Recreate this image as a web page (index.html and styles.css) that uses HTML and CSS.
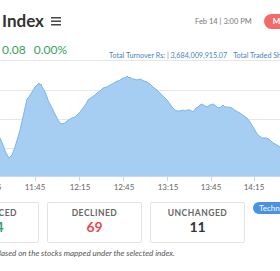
FILE: index.html
```html
<!DOCTYPE html>
<html lang="en">
<head>
    <meta charset="UTF-8">
    <meta name="viewport" content="width=device-width, initial-scale=1.0">
    <title>Index</title>
    <link rel="stylesheet" href="styles.css">
</head>
<body>
    <main class="page">
        <div class="head-row">
            <h1 class="index-title">Index</h1>
            <svg class="menu-icon" width="10" height="9" viewBox="0 0 10 9">
                <rect x="0" y="0" width="10" height="1.5" fill="#444"/>
                <rect x="0" y="3.5" width="10" height="1.5" fill="#444"/>
                <rect x="0" y="7" width="10" height="1.5" fill="#444"/>
            </svg>
            <div class="meta">
                <span class="stamp">Feb 14 | 3:00 PM</span>
                <span class="market-status">Market Closed</span>
            </div>
        </div>

        <div class="sub-row">
            <div class="change">
                <span>0.08</span>
                <span>0.00%</span>
            </div>
            <div class="turnover">
                <span>Total Turnover Rs: | 3,684,009,915.07</span>
                <span>Total Traded Shares: | 9,802,115</span>
            </div>
        </div>

        <svg class="chart" width="280" height="136" viewBox="0 62 280 136">
            <!-- grid -->
            <g stroke="#e6e6e6" stroke-width="1">
                <line x1="0" y1="65.5" x2="280" y2="65.5"/>
                <line x1="0" y1="95.5" x2="280" y2="95.5"/>
                <line x1="0" y1="124.5" x2="280" y2="124.5"/>
                <line x1="0" y1="153.5" x2="280" y2="153.5"/>
            </g>
            <path fill="#a6cdf2" stroke="none"
                d="M0,143 L3,150 L6,158 L9,163 L12,160 L15,152 L18,142 L20,135 L23,122 L25,113 L27,104 L29,102 L30,100 L32,97 L34,94 L35,92 L37,90 L39,88 L40,90 L41,89 L42,92 L44,95 L45,97 L47,102 L48,105 L50,109 L53,115 L56,121 L58,125 L60,128 L62,129 L65,128 L67,126 L70,124 L72,123 L75,122 L77,120 L80,117 L83,113 L86,109 L88,105 L92,102 L95,100 L97,98 L100,96 L103,93 L107,92 L110,90 L112,89 L114,88 L117,86 L119,86 L120,85 L123,83 L125,83 L127,81 L129,83 L130,82 L132,84 L134,84 L137,85 L140,84 L144,86 L147,87 L150,89 L153,92 L157,95 L160,98 L163,101 L167,105 L170,109 L172,112 L175,115 L177,116 L180,116 L183,115 L185,116 L187,115 L190,115 L193,117 L196,113 L198,112 L200,110 L202,109 L205,111 L207,112 L210,110 L213,109 L216,111 L218,113 L221,112 L223,110 L225,112 L228,112 L232,113 L236,116 L240,118 L244,121 L247,123 L250,127 L253,132 L256,137 L258,140 L262,143 L265,143 L267,143 L270,145 L272,147 L275,149 L277,150 L280,152 L280,181 L0,181 Z"/>
            <path fill="none" stroke="#7cb5ec" stroke-width="1"
                d="M0,143 L3,150 L6,158 L9,163 L12,160 L15,152 L18,142 L20,135 L23,122 L25,113 L27,104 L29,102 L30,100 L32,97 L34,94 L35,92 L37,90 L39,88 L40,90 L41,89 L42,92 L44,95 L45,97 L47,102 L48,105 L50,109 L53,115 L56,121 L58,125 L60,128 L62,129 L65,128 L67,126 L70,124 L72,123 L75,122 L77,120 L80,117 L83,113 L86,109 L88,105 L92,102 L95,100 L97,98 L100,96 L103,93 L107,92 L110,90 L112,89 L114,88 L117,86 L119,86 L120,85 L123,83 L125,83 L127,81 L129,83 L130,82 L132,84 L134,84 L137,85 L140,84 L144,86 L147,87 L150,89 L153,92 L157,95 L160,98 L163,101 L167,105 L170,109 L172,112 L175,115 L177,116 L180,116 L183,115 L185,116 L187,115 L190,115 L193,117 L196,113 L198,112 L200,110 L202,109 L205,111 L207,112 L210,110 L213,109 L216,111 L218,113 L221,112 L223,110 L225,112 L228,112 L232,113 L236,116 L240,118 L244,121 L247,123 L250,127 L253,132 L256,137 L258,140 L262,143 L265,143 L267,143 L270,145 L272,147 L275,149 L277,150 L280,152"/>
            <!-- x axis -->
            <line x1="0" y1="181.5" x2="280" y2="181.5" stroke="#ccd6eb"/>
            <g stroke="#ccd6eb">
                <line x1="35.5" y1="181" x2="35.5" y2="186"/>
                <line x1="79.5" y1="181" x2="79.5" y2="186"/>
                <line x1="123.5" y1="181" x2="123.5" y2="186"/>
                <line x1="167.5" y1="181" x2="167.5" y2="186"/>
                <line x1="211.5" y1="181" x2="211.5" y2="186"/>
                <line x1="254.5" y1="181" x2="254.5" y2="186"/>
            </g>
            <g class="axis-label" text-anchor="middle">
                <text x="-9" y="195">11:15</text>
                <text x="35" y="195">11:45</text>
                <text x="80" y="195">12:15</text>
                <text x="124" y="195">12:45</text>
                <text x="168" y="195">13:15</text>
                <text x="211" y="195">13:45</text>
                <text x="254" y="195">14:15</text>
            </g>
        </svg>

        <div class="stats-row">
            <div class="stat">
                <div class="stat-label">ADVANCED</div>
                <div class="stat-value up">124</div>
            </div>
            <div class="stat">
                <div class="stat-label">DECLINED</div>
                <div class="stat-value down">69</div>
            </div>
            <div class="stat">
                <div class="stat-label">UNCHANGED</div>
                <div class="stat-value">11</div>
            </div>
            <span class="tech-tag">Technical</span>
        </div>

        <p class="note">*Based on the stocks mapped under the selected index.</p>
    </main>
</body>
</html>
```

FILE: styles.css
```css
/* General styles */
html, body {
    margin: 0;
    padding: 0;
    overflow: hidden;
    background: #fff;
}

body {
    font-family: Lato, "Noto Sans", sans-serif;
    color: #333;
}

.page {
    width: 360px;
}

/* Title row */
.head-row {
    display: flex;
    align-items: center;
    padding: 11px 0 0 2px;
    height: 20px;
}

.index-title {
    margin: 0;
    font-size: 17px;
    font-weight: 700;
    line-height: 20px;
    color: #333;
}

.menu-icon {
    margin-left: 7px;
    margin-top: 1px;
}

.meta {
    display: flex;
    align-items: center;
    margin-left: 134px;
}

.stamp {
    font-size: 7.5px;
    color: #777;
}

.market-status {
    margin-left: 12px;
    background: #f26a6a;
    color: #fff;
    font-size: 8px;
    font-weight: 700;
    line-height: 15px;
    padding: 0 8px 0 9px;
    border-radius: 8px;
}

/* Change + turnover row */
.sub-row {
    display: flex;
    align-items: flex-end;
    padding: 8px 0 0 2px;
    height: 26px;
    box-sizing: border-box;
}

.change {
    display: flex;
    gap: 8px;
    font-size: 12px;
    line-height: 14px;
    color: #34a35a;
}

.turnover {
    display: flex;
    gap: 6px;
    margin-left: 42px;
    font-size: 7.2px;
    line-height: 9px;
    color: #4a84c4;
    white-space: nowrap;
    margin-bottom: -3px;
}

/* Chart */
.chart {
    display: block;
}

.axis-label {
    font-family: Lato, "Noto Sans", sans-serif;
    font-size: 8px;
    fill: #666;
}

/* Stats cards */
.stats-row {
    display: flex;
    align-items: flex-start;
    gap: 8px;
    margin: 9px 0 0 -56px;
}

.stat {
    width: 95px;
    box-sizing: border-box;
    border: 1px solid #e3e3e3;
    border-radius: 2px;
    padding: 4px 0 7px;
    text-align: center;
}

.stat-label {
    font-size: 8.5px;
    font-weight: 700;
    line-height: 12px;
    letter-spacing: 0.5px;
    color: #666;
}

.stat-value {
    font-size: 14px;
    font-weight: 700;
    line-height: 16px;
    color: #333;
}

.stat-value.up { color: #2fa36b; }
.stat-value.down { color: #e8474c; }

.tech-tag {
    background: #4a92e2;
    color: #fff;
    font-size: 8px;
    line-height: 12px;
    padding: 0 6px;
    border-radius: 6px;
}

.note {
    margin: 4px 0 0 -7px;
    font-size: 8px;
    line-height: 12px;
    font-style: italic;
    color: #555;
}
```
